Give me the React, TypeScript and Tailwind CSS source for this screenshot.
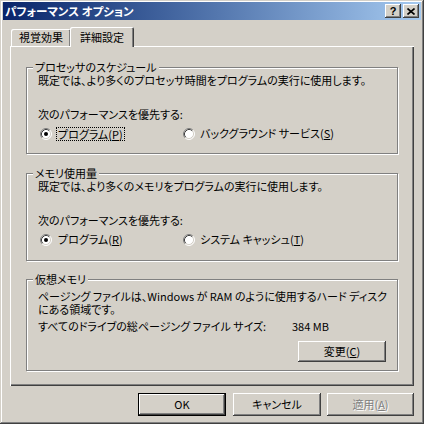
import React from 'react';

const raised =
  'bg-[#d4d0c8] shadow-[inset_-1px_-1px_#404040,inset_1px_1px_#fff,inset_-2px_-2px_#808080,inset_2px_2px_#d4d0c8]';

function Radio({ checked }: { checked?: boolean }) {
  return (
    <svg width="12" height="12" viewBox="0 0 12 12" className="shrink-0">
      <circle cx="6" cy="6" r="5" fill="#fff" />
      <path d="M2.11 9.89 A5.5 5.5 0 0 1 9.89 2.11" fill="none" stroke="#808080" />
      <path d="M9.89 2.11 A5.5 5.5 0 0 1 2.11 9.89" fill="none" stroke="#fff" />
      <path d="M2.82 9.18 A4.5 4.5 0 0 1 9.18 2.82" fill="none" stroke="#404040" />
      <path d="M9.18 2.82 A4.5 4.5 0 0 1 2.82 9.18" fill="none" stroke="#d4d0c8" />
      {checked && <circle cx="6" cy="6" r="2" fill="#000" />}
    </svg>
  );
}

function Group({ title, className, children }: { title: string; className: string; children: React.ReactNode }) {
  return (
    <div className={`relative border border-[#808080] shadow-[1px_1px_#fff,inset_1px_1px_#fff] ${className}`}>
      <span className="absolute left-[6px] top-[-7px] px-[2px] leading-[12px] bg-[#d4d0c8]">{title}</span>
      {children}
    </div>
  );
}

function PriorityRows({ first, firstKey, second, secondKey, focused }: { first: string; firstKey: string; second: string; secondKey: string; focused?: boolean }) {
  return (
    <>
      <div className="mt-[21px]">次のパフォーマンスを優先する:</div>
      <div className="mt-[6px] ml-[2px] flex items-center h-[13px]">
        <div className="w-[143px] flex items-center gap-[4px]">
          <Radio checked />
          <span className={focused ? 'border border-dotted border-black px-[1px] leading-[12px]' : 'px-[2px]'}>
            {first}(<span className="underline">{firstKey}</span>)
          </span>
        </div>
        <div className="flex items-center gap-[5px]">
          <Radio />
          <span>
            {second}(<span className="underline">{secondKey}</span>)
          </span>
        </div>
      </div>
    </>
  );
}

export default function App() {
  return (
    <div className="w-[424px] h-[424px] bg-[#d4d0c8] px-[3px] pt-[2px] flex flex-col text-[11px] leading-[13px] text-black font-['Noto_Sans_CJK_JP',sans-serif] [font-feature-settings:'palt'] shadow-[inset_-1px_-1px_#404040,inset_1px_1px_#d4d0c8,inset_-2px_-2px_#808080,inset_2px_2px_#fff]">
      {/* Title bar */}
      <div className="h-[18px] flex items-center bg-linear-to-r from-[#0a246a] to-[#a6caf0] pl-[2px] pr-[2px]">
        <span className="flex-1 font-bold text-white text-[11.5px]">パフォーマンス オプション</span>
        <div className={`w-[16px] h-[14px] flex items-center justify-center font-bold text-[11px] font-['Liberation_Sans',sans-serif] ${raised}`}>?</div>
        <div className={`ml-[2px] w-[16px] h-[14px] flex items-center justify-center ${raised}`}>
          <svg width="8" height="7" viewBox="0 0 8 7">
            <path d="M0.5 0.5 L7.5 6.5 M7.5 0.5 L0.5 6.5" stroke="#000" strokeWidth="1.6" />
          </svg>
        </div>
      </div>

      <div className="px-[7px] flex flex-col">
        {/* Tabs */}
        <div className="mt-[7px] h-[19px] flex items-end pl-[1px]">
          <div className="h-[17px] w-[60px] flex items-center justify-center rounded-t-[2px] shadow-[inset_1px_1px_#fff,inset_-1px_0_#404040,inset_-2px_0_#808080]">
            視覚効果
          </div>
          <div className="relative z-10 -mb-[1px] -ml-[1px] h-[20px] w-[64px] bg-[#d4d0c8] flex items-center justify-center rounded-t-[2px] shadow-[inset_1px_1px_#fff,inset_-1px_0_#404040,inset_-2px_0_#808080]">
            詳細設定
          </div>
        </div>

        {/* Panel */}
        <div className="h-[340px] pt-[21px] px-[16px] shadow-[inset_1px_1px_#fff,inset_-1px_-1px_#404040,inset_-2px_-2px_#808080]">
          <Group title="プロセッサのスケジュール" className="h-[87px] pt-[6px] pl-[11px]">
            <div className="whitespace-nowrap">既定では、より多くのプロセッサ時間をプログラムの実行に使用します。</div>
            <PriorityRows first="プログラム" firstKey="P" second="バックグラウンド サービス" secondKey="S" focused />
          </Group>

          <Group title="メモリ使用量" className="mt-[19px] h-[88px] pt-[6px] pl-[11px]">
            <div className="whitespace-nowrap">既定では、より多くのメモリをプログラムの実行に使用します。</div>
            <PriorityRows first="プログラム" firstKey="R" second="システム キャッシュ" secondKey="T" />
          </Group>

          <Group title="仮想メモリ" className="mt-[18px] h-[92px] pt-[10px] pl-[11px] pr-[11px]">
            <div className="whitespace-nowrap">ページング ファイルは、Windows が RAM のように使用するハード ディスク</div>
            <div>にある領域です。</div>
            <div className="mt-[4px] flex whitespace-nowrap">
              <span className="w-[254px]">すべてのドライブの総ページング ファイル サイズ:</span>
              <span>384 MB</span>
            </div>
            <div className="mt-[8px] flex justify-end">
              <div className={`w-[88px] h-[21px] flex items-center justify-center ${raised}`}>
                変更(<span className="underline">C</span>)
              </div>
            </div>
          </Group>
        </div>

        {/* Dialog buttons */}
        <div className="mt-[7px] flex justify-end">
          <div className="w-[88px] h-[23px] border border-black flex">
            <div className={`flex-1 flex items-center justify-center ${raised}`}>OK</div>
          </div>
          <div className={`ml-[7px] w-[88px] h-[23px] flex items-center justify-center ${raised}`}>キャンセル</div>
          <div className={`ml-[6px] w-[87px] h-[23px] flex items-center justify-center text-[#808080] [text-shadow:1px_1px_#fff] ${raised}`}>
            適用(<span className="underline">A</span>)
          </div>
        </div>
      </div>
    </div>
  );
}
